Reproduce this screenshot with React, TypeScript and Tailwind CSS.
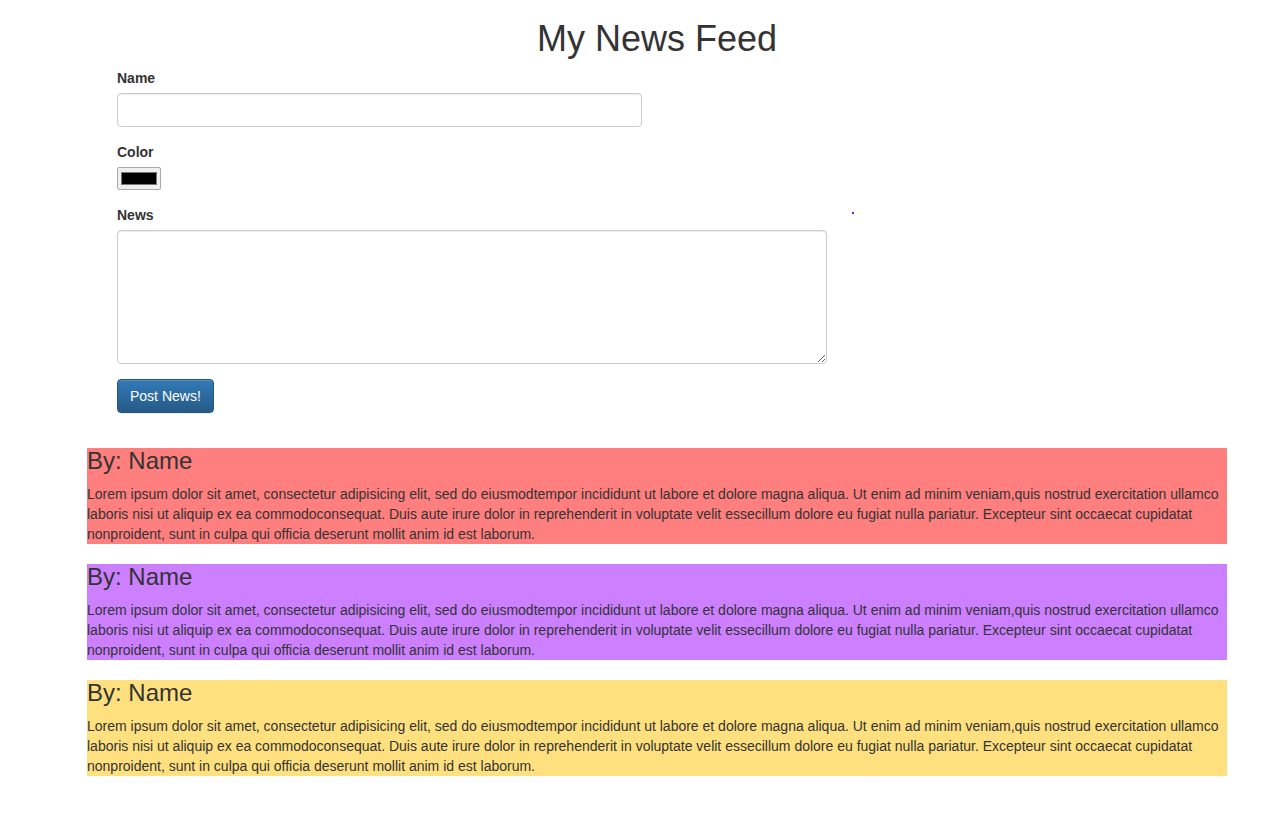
import React from "react";

const lorem =
  "Lorem ipsum dolor sit amet, consectetur adipisicing elit, sed do eiusmodtempor incididunt ut labore et dolore magna aliqua. Ut enim ad minim veniam,quis nostrud exercitation ullamco laboris nisi ut aliquip ex ea commodoconsequat. Duis aute irure dolor in reprehenderit in voluptate velit essecillum dolore eu fugiat nulla pariatur. Excepteur sint occaecat cupidatat nonproident, sunt in culpa qui officia deserunt mollit anim id est laborum.";

function Card({ bg }: { bg: string }) {
  return (
    <div className={`${bg} mb-[20px]`}>
      <h3 className="text-[24px] leading-[26px] font-normal text-[#333]">By: Name</h3>
      <p className="mt-[10px] text-[14px] leading-[20px] text-[#333]">{lorem}</p>
    </div>
  );
}

export default function App() {
  return (
    <div
      className="min-h-[823px] bg-white text-[#333] relative"
      style={{ fontFamily: '"Liberation Sans", Arial, Helvetica, sans-serif' }}
    >
      <div className="w-[1140px] ml-[87px]">
        <h1 className="pt-[19px] text-[36px] leading-[40px] font-normal text-center text-[#333] mb-[9px]">
          My News Feed
        </h1>
        <form className="px-[30px]" onSubmit={(e) => e.preventDefault()}>
          <div className="mb-[15px]">
            <label className="block text-[14px] leading-[20px] font-bold mb-[5px]">Name</label>
            <input
              type="text"
              className="block w-[525px] h-[34px] border border-[#ccc] rounded-[4px] px-3 text-[14px] shadow-[inset_0_1px_1px_rgba(0,0,0,0.075)] outline-none"
            />
          </div>
          <div className="mb-[15px]">
            <label className="block text-[14px] leading-[20px] font-bold mb-[5px]">Color</label>
            <div className="w-[44px] h-[23px] border border-[#a9a9a9] rounded-[2px] bg-[#efefef] flex items-center justify-center">
              <div className="w-[36px] h-[13px] bg-black border border-[#777]" />
            </div>
          </div>
          <div className="mb-[15px]">
            <label className="block text-[14px] leading-[20px] font-bold mb-[5px]">News</label>
            <textarea className="block w-[710px] h-[134px] border border-[#ccc] rounded-[4px] px-3 py-1.5 text-[14px] shadow-[inset_0_1px_1px_rgba(0,0,0,0.075)] outline-none" />
          </div>
          <button
            type="submit"
            className="h-[34px] px-[12px] text-[14px] text-white rounded-[4px] border border-[#245580] bg-gradient-to-b from-[#337ab7] to-[#265a88] shadow-[inset_0_1px_0_rgba(255,255,255,0.15),0_1px_1px_rgba(0,0,0,0.075)]"
          >
            Post News!
          </button>
        </form>
        <div className="mt-[35px]">
          <Card bg="bg-[#ff7f7f]" />
          <Card bg="bg-[#cc7fff]" />
          <Card bg="bg-[#ffe07f]" />
        </div>
      </div>
      <div className="absolute left-[852px] top-[212px] w-[2px] h-[2px] bg-[#3333ff]" />
    </div>
  );
}
